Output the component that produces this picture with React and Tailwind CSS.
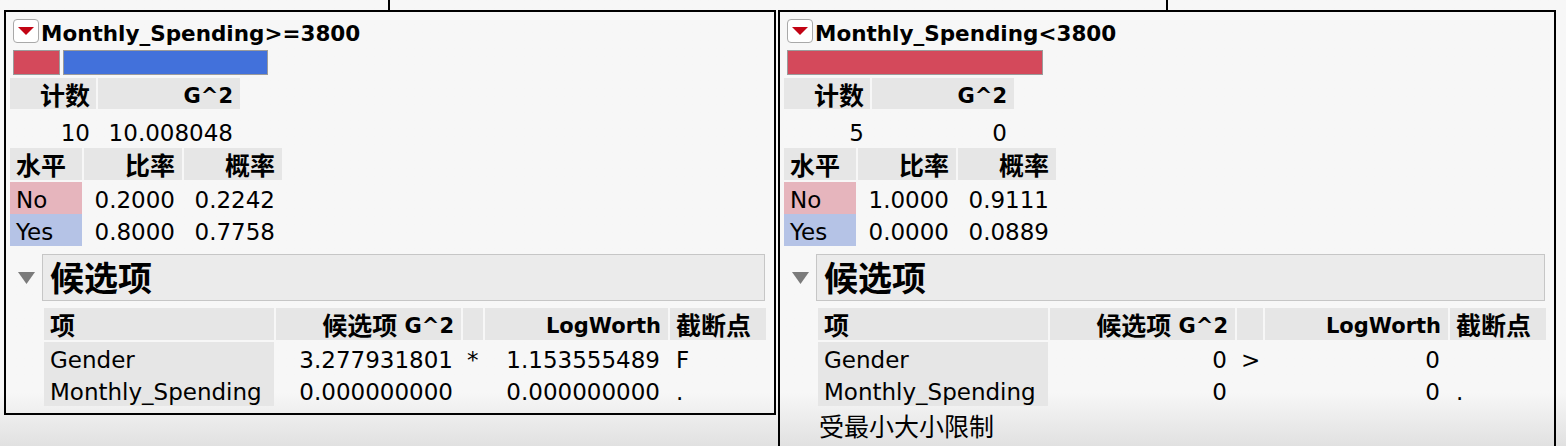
const FONT = "font-['DejaVu_Sans','Noto_Sans_CJK_SC',sans-serif]";

const panels = [
  {
    key: "ge",
    title: "Monthly_Spending>=3800",
    bars: [
      { key: "no", cls: "w-[47px] bg-[#d4495b]" },
      { key: "yes", cls: "w-[205px] bg-[#4271db]" },
    ],
    count: "10",
    g2: "10.008048",
    levels: [
      ["No", "0.2000", "0.2242"],
      ["Yes", "0.8000", "0.7758"],
    ],
    cols: ["w-[230px]", "w-[185px]", "w-[20px]", "w-[183px]", "w-[96px]"],
    rows: [
      ["Gender", "3.277931801", "*", "1.153555489", "F"],
      ["Monthly_Spending", "0.000000000", "", "0.000000000", "."],
    ],
    note: null,
  },
  {
    key: "lt",
    title: "Monthly_Spending<3800",
    bars: [{ key: "no", cls: "w-[256px] bg-[#d4495b]" }],
    count: "5",
    g2: "0",
    levels: [
      ["No", "1.0000", "0.9111"],
      ["Yes", "0.0000", "0.0889"],
    ],
    cols: ["w-[230px]", "w-[185px]", "w-[26px]", "w-[183px]", "w-[96px]"],
    rows: [
      ["Gender", "0", ">", "0", ""],
      ["Monthly_Spending", "0", "", "0", "."],
    ],
    note: "受最小大小限制",
  },
];

// header cells sit a little low in JMP, hence the top padding
const head = "h-[31px] flex items-center pt-[6px] bg-[#e6e6e6] font-bold";
const cell = "flex items-center pt-[5px]";
const cjk = "text-[25px]";

function Panel({ data, className }) {
  const [c0, c1, c2, c3, c4] = data.cols;

  return (
    <section className={`flex flex-col border-2 border-black ${className}`}>
      <div className="mt-[7px] flex items-start">
        <div className="ml-[7px] h-[24px] w-[26px] rounded-[4px] border border-[#a9a9a9] bg-white">
          <svg width="24" height="22" viewBox="0 0 24 22">
            <polygon points="4,7 20,7 12,15" fill="#c20414" />
          </svg>
        </div>
        <h2 className="ml-[2px] mt-[3px] text-[21.5px] font-bold leading-[24px] text-black">
          {data.title}
        </h2>
      </div>

      <div className="ml-[7px] mt-[4px] flex h-[25px] gap-[3px]">
        {data.bars.map((bar) => (
          <div key={bar.key} className={`h-full border border-[#9b9b9b] ${bar.cls}`} />
        ))}
      </div>

      <div className="ml-[4px] mt-[3px] flex flex-col">
        <div className="flex gap-[2px]">
          <div className={`${head} w-[86px] justify-end pr-[6px] ${cjk}`}>计数</div>
          <div className={`${head} w-[142px] justify-end pr-[7px] text-[21px]`}>G^2</div>
        </div>
        <div className="mt-[6px] flex gap-[2px] text-[23px]">
          <div className={`${cell} h-[32px] w-[86px] justify-end pr-[6px]`}>{data.count}</div>
          <div className={`${cell} h-[32px] w-[142px] justify-end pr-[7px]`}>{data.g2}</div>
        </div>
      </div>

      <div className="ml-[4px] mt-[1px] flex flex-col">
        <div className="flex gap-[2px]">
          <div className={`${head} h-[32px] w-[72px] pl-[6px] ${cjk}`}>水平</div>
          <div className={`${head} h-[32px] w-[98px] justify-end pr-[7px] ${cjk}`}>比率</div>
          <div className={`${head} h-[32px] w-[98px] justify-end pr-[7px] ${cjk}`}>概率</div>
        </div>
        <div className="mt-[2px] flex flex-col text-[23px]">
          {data.levels.map(([level, rate, prob]) => (
            <div key={level} className="flex h-[32px] gap-[2px]">
              <div
                className={`${cell} w-[72px] pl-[6px] ${
                  level === "No" ? "bg-[#e6b5bd]" : "bg-[#b5c3e6]"
                }`}
              >
                {level}
              </div>
              <div className={`${cell} w-[98px] justify-end pr-[7px]`}>{rate}</div>
              <div className={`${cell} w-[98px] justify-end pr-[7px]`}>{prob}</div>
            </div>
          ))}
        </div>
      </div>

      <div className="mr-[9px] mt-[8px] flex">
        <svg className="ml-[12px] mt-[18px] shrink-0" width="17" height="12" viewBox="0 0 17 12">
          <polygon points="0,0 17,0 8.5,12" fill="#7b7b7b" />
        </svg>
        <div className="ml-[7px] flex h-[47px] flex-1 items-center border border-[#c6c6c6] bg-[#ebebeb] pl-[7px] pt-[2px]">
          <span className="text-[34px] font-bold leading-none">候选项</span>
        </div>
      </div>

      <div className="ml-[38px] mt-[7px] flex flex-col">
        <div className="flex gap-[2px]">
          <div className={`${head} h-[32px] pl-[6px] ${c0} ${cjk}`}>项</div>
          <div className={`${head} h-[32px] justify-end pr-[7px] ${c1}`}>
            <span className={cjk}>候选项</span>
            <span className="text-[21px]">&nbsp;G^2</span>
          </div>
          <div className={`${head} h-[32px] ${c2}`} />
          <div className={`${head} h-[32px] justify-end pr-[7px] text-[21px] ${c3}`}>LogWorth</div>
          <div className={`${head} h-[32px] pl-[6px] ${c4} ${cjk}`}>截断点</div>
        </div>
        <div className="mt-[2px] flex flex-col text-[23px]">
          {data.rows.map(([term, g2, mark, logworth, cut]) => (
            <div key={term} className="flex h-[32px] gap-[2px]">
              <div className={`${cell} bg-[#e6e6e6] pl-[6px] ${c0}`}>{term}</div>
              <div className={`${cell} justify-end pr-[8px] ${c1}`}>{g2}</div>
              <div className={`${cell} pl-[4px] ${c2}`}>{mark}</div>
              <div className={`${cell} justify-end pr-[8px] ${c3}`}>{logworth}</div>
              <div className={`${cell} pl-[6px] ${c4}`}>{cut}</div>
            </div>
          ))}
        </div>
      </div>

      {data.note && (
        <div className={`ml-[39px] mt-[4px] flex h-[32px] items-center pt-[4px] ${cjk}`}>{data.note}</div>
      )}
    </section>
  );
}

export default function App() {
  return (
    <div
      className={`h-[446px] w-[1566px] overflow-hidden bg-linear-to-b from-[#f7f7f7] from-[88%] to-[#e1e1e1] text-black ${FONT}`}
    >
      <div className="flex h-[10px]">
        <div className="ml-[388px] w-[2px] bg-black" />
        <div className="ml-[776px] w-[2px] bg-black" />
      </div>
      <div className="flex items-start">
        <Panel data={panels[0]} className="ml-[4px] h-[405px] w-[772px]" />
        <Panel data={panels[1]} className="ml-[2px] h-[440px] w-[778px] border-b-0" />
      </div>
    </div>
  );
}
